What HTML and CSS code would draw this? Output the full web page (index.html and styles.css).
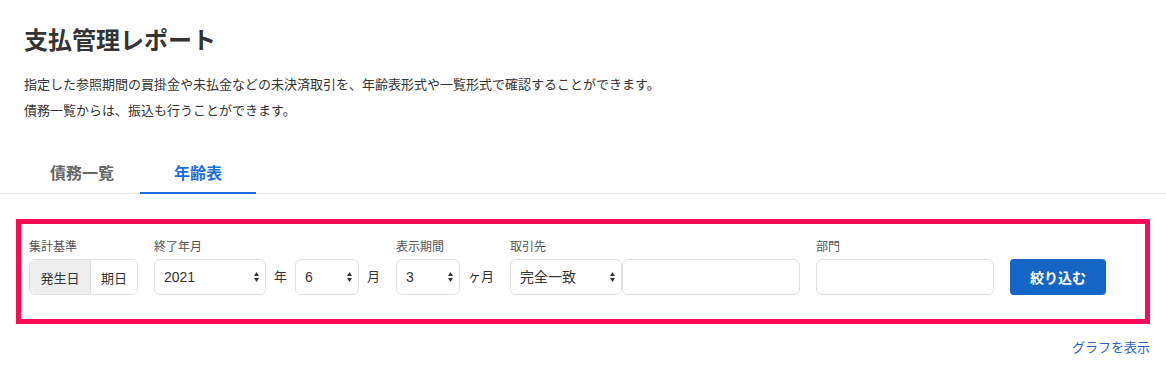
FILE: index.html
```html
<!DOCTYPE html>
<html lang="ja">
<head>
<meta charset="utf-8">
<title>支払管理レポート</title>
<link rel="stylesheet" href="styles.css">
</head>
<body>
<header class="page-header">
  <h1 class="page-title">支払管理レポート</h1>
  <p class="page-desc">指定した参照期間の買掛金や未払金などの未決済取引を、年齢表形式や一覧形式で確認することができます。</p>
  <p class="page-desc">債務一覧からは、振込も行うことができます。</p>
</header>

<nav class="tabs">
  <a class="tab" href="#">債務一覧</a>
  <a class="tab tab--active" href="#">年齢表</a>
</nav>

<form class="filter">
  <div class="field">
    <div class="field-label">集計基準</div>
    <div class="seg">
      <button type="button" class="seg-btn seg-btn--on">発生日</button>
      <button type="button" class="seg-btn">期日</button>
    </div>
  </div>

  <div class="field">
    <div class="field-label">終了年月</div>
    <div class="field-row">
      <span class="select select--wide">
        <select><option>2021</option></select>
        <svg class="select-arrow" viewBox="0 0 5 10"><polygon points="0,4 2.5,0 5,4"/><polygon points="0,6 2.5,10 5,6"/></svg>
      </span>
      <span class="unit">年</span>
      <span class="select select--narrow">
        <select><option>6</option></select>
        <svg class="select-arrow" viewBox="0 0 5 10"><polygon points="0,4 2.5,0 5,4"/><polygon points="0,6 2.5,10 5,6"/></svg>
      </span>
      <span class="unit">月</span>
    </div>
  </div>

  <div class="field">
    <div class="field-label">表示期間</div>
    <div class="field-row">
      <span class="select select--narrow">
        <select><option>3</option></select>
        <svg class="select-arrow" viewBox="0 0 5 10"><polygon points="0,4 2.5,0 5,4"/><polygon points="0,6 2.5,10 5,6"/></svg>
      </span>
      <span class="unit">ヶ月</span>
    </div>
  </div>

  <div class="field">
    <div class="field-label">取引先</div>
    <div class="field-row field-row--tight">
      <span class="select select--wide">
        <select><option>完全一致</option></select>
        <svg class="select-arrow" viewBox="0 0 5 10"><polygon points="0,4 2.5,0 5,4"/><polygon points="0,6 2.5,10 5,6"/></svg>
      </span>
      <input class="text-input" type="text">
    </div>
  </div>

  <div class="field">
    <div class="field-label">部門</div>
    <input class="text-input" type="text">
  </div>

  <button type="button" class="submit">絞り込む</button>
</form>

<div class="graph-link-row"><a class="graph-link" href="#">グラフを表示</a></div>
</body>
</html>
```

FILE: styles.css
```css
* { box-sizing: border-box; }

body {
  margin: 0;
  font-family: "Liberation Sans", "Noto Sans CJK JP", sans-serif;
  color: #333;
  background: #fff;
}

.page-header { padding: 23px 24px 0; }

.page-title {
  margin: 0;
  font-size: 24px;
  line-height: 36px;
  font-weight: 700;
  color: #333;
}

.page-desc {
  margin: 0;
  font-size: 13px;
  line-height: 26px;
  color: #333;
}

.page-title + .page-desc { margin-top: 13px; }

.tabs {
  display: flex;
  margin-top: 34px;
  padding-left: 24px;
  border-bottom: 1px solid #e2e2e2;
}

.tab {
  width: 116px;
  padding: 4px 0 6px;
  line-height: 24px;
  font-size: 16px;
  font-weight: 700;
  color: #666;
  text-align: center;
  text-decoration: none;
  border-bottom: 2px solid transparent;
  margin-bottom: -1px;
}

.tab--active {
  color: #1a6fe0;
  border-bottom-color: #1a6fe0;
}

.filter {
  margin: 25px 16px 0;
  border: 5px solid #ff0a55;
  padding: 14px 8px 24px;
  display: flex;
  gap: 16px;
}

.field-label {
  font-size: 12px;
  line-height: 18px;
  color: #555;
  margin-bottom: 3px;
}

.field-row {
  display: flex;
  align-items: center;
  gap: 8px;
}

.field-row--tight { gap: 0; }

.unit {
  font-size: 13px;
  line-height: 36px;
  color: #333;
}

.seg {
  display: flex;
  height: 36px;
  border: 1px solid #e0e0e0;
  border-radius: 6px;
  overflow: hidden;
}

.seg-btn {
  border: 0;
  margin: 0;
  padding: 0;
  font-family: inherit;
  font-size: 13px;
  color: #333;
  background: #fff;
  width: 46px;
}

.seg-btn--on {
  width: 61px;
  background: #eeeeee;
  border-right: 1px solid #e0e0e0;
}

.select {
  position: relative;
  display: block;
}

.select select {
  display: block;
  width: 100%;
  height: 36px;
  -webkit-appearance: none;
  appearance: none;
  border: 1px solid #e0e0e0;
  border-radius: 6px;
  background: #fff;
  padding: 0 18px 0 9px;
  font-family: inherit;
  font-size: 14px;
  color: #333;
}

.select--wide { width: 112px; }
.select--narrow { width: 64px; }

.select-arrow {
  position: absolute;
  right: 7px;
  top: 13px;
  width: 5px;
  height: 10px;
  fill: #333;
  pointer-events: none;
}

.text-input {
  display: block;
  width: 178px;
  height: 36px;
  margin: 0;
  border: 1px solid #e0e0e0;
  border-radius: 6px;
  background: #fff;
  font-family: inherit;
  font-size: 14px;
}

.submit {
  align-self: flex-end;
  width: 96px;
  height: 36px;
  border: 0;
  border-radius: 4px;
  background: #1565c4;
  color: #fff;
  font-family: inherit;
  font-size: 14px;
  font-weight: 700;
}

.graph-link-row {
  margin: 14px 16px 0;
  text-align: right;
  font-size: 13px;
  line-height: 20px;
}

.graph-link {
  color: #2b62c4;
  text-decoration: none;
}
```
